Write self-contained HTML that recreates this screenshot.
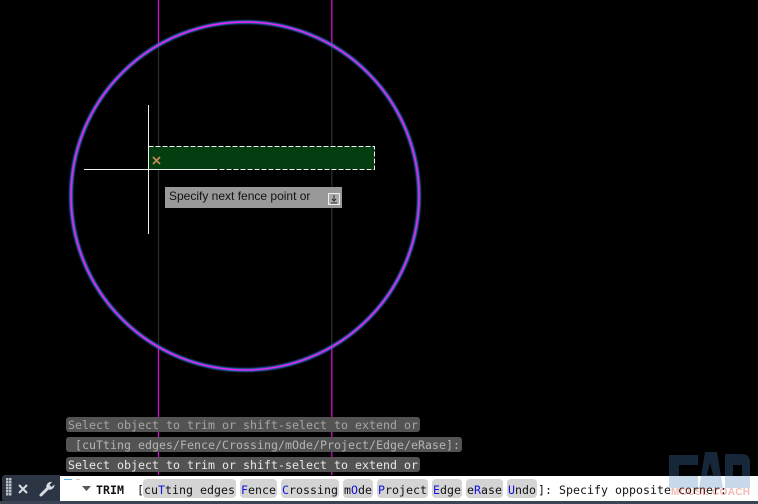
<!DOCTYPE html>
<html><head><meta charset="utf-8">
<style>
html,body{margin:0;padding:0;background:#000;width:758px;height:504px;overflow:hidden}
#s{position:absolute;left:0;top:0}
.r{position:absolute;left:66px;height:15px;background:#535353;border-radius:3px;font:11.6px/17px "DejaVu Sans Mono",monospace;letter-spacing:.02px;white-space:pre;padding-left:2px;box-sizing:border-box;overflow:hidden}
.bar{position:absolute;left:2px;top:475px;width:58px;height:27px;background:#2c3543;border-radius:3px 0 0 3px}
.foot{position:absolute;left:0;top:501px;width:758px;height:3px;background:#3b4453}
.inp{position:absolute;left:60px;top:476px;width:698px;height:25px;background:#fff}
.t{position:absolute;top:5px;height:18px;font:11.6px/18px "DejaVu Sans Mono",monospace;letter-spacing:.02px;color:#111;white-space:pre}
.k{background:#d4d4d4;border-radius:4px;position:absolute;top:3px;height:19px}
b{font-weight:normal;color:#1212e0}
#tip{position:absolute;left:165px;top:187px;width:177px;height:21px;background:#999;font:12px/19px "Liberation Sans",sans-serif;color:#111;padding-left:4px;box-sizing:border-box}
</style></head><body>
<svg id="s" width="758" height="504" viewBox="0 0 758 504">
<defs><filter id="gl" x="-5%" y="-5%" width="110%" height="110%"><feGaussianBlur stdDeviation=".7"/></filter></defs>
<line x1="158.500" y1="0" x2="158.500" y2="45" stroke="#d010d0" stroke-width="1.300"/>
<line x1="158.500" y1="45" x2="158.500" y2="347" stroke="#2c2c2c" stroke-width="1.300"/>
<line x1="158.500" y1="347" x2="158.500" y2="475" stroke="#d010d0" stroke-width="1.300"/>
<line x1="331.800" y1="0" x2="331.800" y2="45" stroke="#d010d0" stroke-width="1.300"/>
<line x1="331.800" y1="45" x2="331.800" y2="347" stroke="#2c2c2c" stroke-width="1.300"/>
<line x1="331.800" y1="347" x2="331.800" y2="475" stroke="#d010d0" stroke-width="1.300"/>
<circle cx="245" cy="196" r="174" fill="none" stroke="#2f70d0" stroke-width="3.600" filter="url(#gl)"/>
<circle cx="245" cy="196" r="174" fill="none" stroke="#f020f0" stroke-width="1.400"/>
<rect x="148.500" y="146.500" width="226" height="23" fill="#033d10"/>
<rect x="148.500" y="146.500" width="226" height="23" fill="none" stroke="#f0f0f0" stroke-width="1" stroke-dasharray="5 2"/>
<line x1="148.500" y1="105" x2="148.500" y2="234" stroke="#f0f0f0" stroke-width="1"/>
<line x1="84" y1="169.500" x2="213" y2="169.500" stroke="#f0f0f0" stroke-width="1"/>
<path d="M153 157l7 7M160 157l-7 7" stroke="#c08a58" stroke-width="1.800" fill="none"/>
</svg>
<div class="r" style="top:417px;width:354px;color:#a6a6a6">Select object to trim or shift-select to extend or</div>
<div class="r" style="top:437px;width:396px;color:#b4b4b4"> [cuTting edges/Fence/Crossing/mOde/Project/Edge/eRase]:</div>
<div class="r" style="top:457px;width:354px;color:#e8e8e8">Select object to trim or shift-select to extend or</div>
<div class="bar"></div>
<div class="foot"></div>
<svg style="position:absolute;left:0;top:470px" width="60" height="34" viewBox="0 0 60 34">
<g fill="#b9bec6"><rect x="6" y="8" width="2.500" height="2.500"/><rect x="9" y="8" width="2.500" height="2.500"/><rect x="6" y="11" width="2.500" height="2.500"/><rect x="9" y="11" width="2.500" height="2.500"/><rect x="6" y="14" width="2.500" height="2.500"/><rect x="9" y="14" width="2.500" height="2.500"/><rect x="6" y="17" width="2.500" height="2.500"/><rect x="9" y="17" width="2.500" height="2.500"/><rect x="6" y="20" width="2.500" height="2.500"/><rect x="9" y="20" width="2.500" height="2.500"/><rect x="6" y="23" width="2.500" height="2.500"/><rect x="9" y="23" width="2.500" height="2.500"/></g>
<path d="M19 15l8 8M27 15l-8 8" stroke="#d8dbe0" stroke-width="2" fill="none"/>
<path d="M41 25l8-8" stroke="#d8dbe0" stroke-width="3" stroke-linecap="round" fill="none"/>
<path d="M47 19a4.500 4.500 0 0 1 1-6 5 5 0 0 1 4-1l-2.500 3 2 2 3-2.500a5 5 0 0 1-7.500 4.500z" fill="#d8dbe0"/>
</svg>
<div class="inp">
<div style="position:absolute;left:4px;top:3px;width:8px;height:1px;background:#5bbcf0"></div>
<div style="position:absolute;left:16px;top:3px;width:4px;height:1px;background:#ccc"></div>
<svg style="position:absolute;left:22px;top:10px" width="10" height="6"><path d="M0 0h9l-4.500 5z" fill="#555"/></svg>
<div class="t" style="left:36px;font-weight:bold">TRIM</div>
<div class="t" style="left:77px">[</div>
<div class="k" style="left:83px;width:93px"></div><div class="t" style="left:84px">cu<b>T</b>ting edges</div>
<div class="k" style="left:180px;width:37px"></div><div class="t" style="left:181px"><b>F</b>ence</div>
<div class="k" style="left:221px;width:58px"></div><div class="t" style="left:222px"><b>C</b>rossing</div>
<div class="k" style="left:283px;width:30px"></div><div class="t" style="left:284px">m<b>O</b>de</div>
<div class="k" style="left:317px;width:51px"></div><div class="t" style="left:318px"><b>P</b>roject</div>
<div class="k" style="left:372px;width:30px"></div><div class="t" style="left:373px"><b>E</b>dge</div>
<div class="k" style="left:406px;width:37px"></div><div class="t" style="left:407px">e<b>R</b>ase</div>
<div class="k" style="left:447px;width:30px"></div><div class="t" style="left:448px"><b>U</b>ndo</div>
<div class="t" style="left:478px">]: Specify opposite corner:</div>
</div>
<svg style="position:absolute;left:0;top:0;pointer-events:none" width="758" height="504" viewBox="0 0 758 504">
<g fill="#4a80c0" fill-opacity=".3">
<path d="M669 455h29v10h-19v11h19v12h-29z"/>
<path d="M699 488l6-36h12l6 36zM707 475h6l-3-12z"/>
<path d="M725 454h17c5 0 8 3 8 8v26h-25zM733 465v11h9v-11z"/>
</g>
<text x="671" y="495" font-family="Liberation Sans, sans-serif" font-size="10" font-weight="bold" fill="#e05040" fill-opacity=".4" textLength="79">MOUSE COACH</text>
</svg>
<div id="tip">Specify next fence point or
<svg style="position:absolute;left:163px;top:6px" width="12" height="12"><rect x=".5" y=".5" width="11" height="11" fill="#aaa" stroke="#eee"/><path d="M6 2v6M4 6l2 2 2-2M3 10h6" stroke="#333" fill="none"/></svg>
</div>
</body></html>
